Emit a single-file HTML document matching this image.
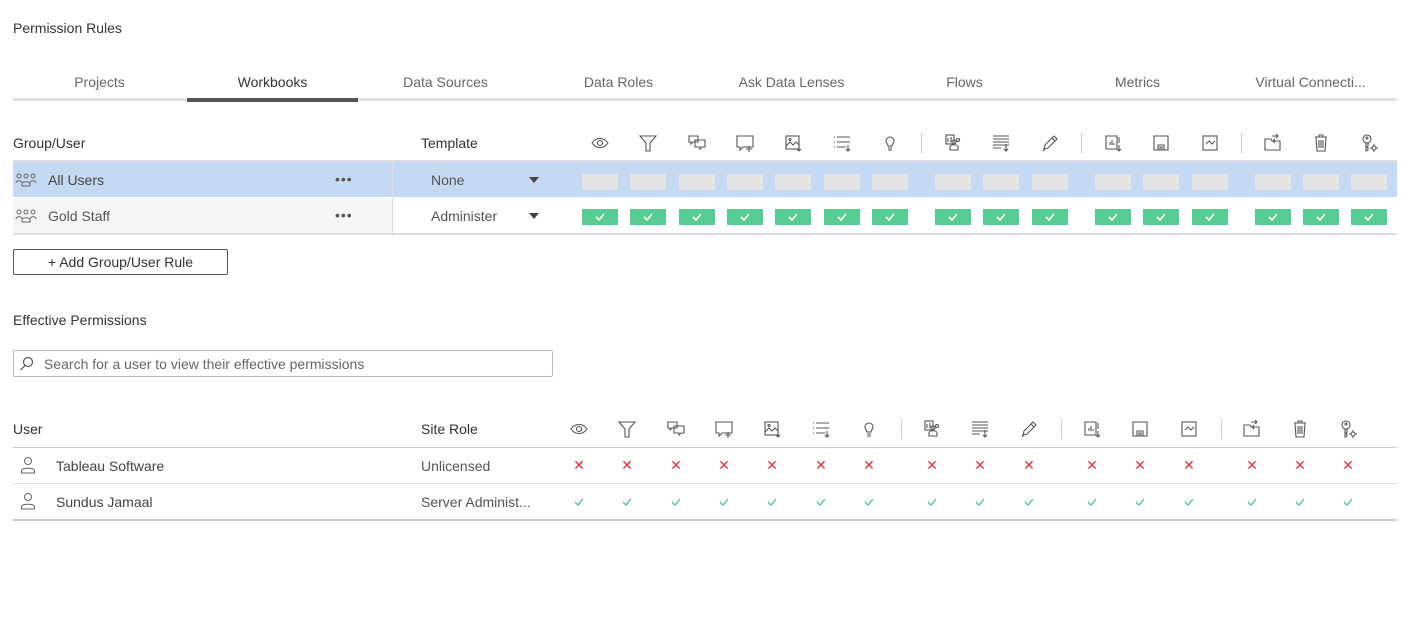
<!DOCTYPE html>
<html><head><meta charset="utf-8"><style>
*{box-sizing:border-box;margin:0;padding:0}
body{width:1409px;height:620px;background:#fff;font-family:"Liberation Sans",sans-serif;color:#333;position:relative;overflow:hidden;font-size:14px}
.a{position:absolute;white-space:nowrap}
.tab{position:absolute;top:74px;width:173px;text-align:center;color:#666;font-size:14px}
.box{position:absolute;width:36px;height:16px}
.g{background:#e4e4e4}
.ok{background:#59cc93}
.ic{position:absolute}
</style></head><body>
<div class="a" style="left:13px;top:20px;font-size:14px;color:#333">Permission Rules</div>
<div class="tab" style="left:13px">Projects</div>
<div class="tab" style="left:186px;color:#333">Workbooks</div>
<div class="tab" style="left:359px">Data Sources</div>
<div class="tab" style="left:532px">Data Roles</div>
<div class="tab" style="left:705px">Ask Data Lenses</div>
<div class="tab" style="left:878px">Flows</div>
<div class="tab" style="left:1051px">Metrics</div>
<div class="tab" style="left:1224px">Virtual Connecti...</div>
<div class="a" style="left:13px;top:98px;width:1384px;height:3px;background:#e2e2e2"></div>
<div class="a" style="left:187px;top:98px;width:171px;height:4px;background:#555"></div>

<div class="a" style="left:13px;top:135px">Group/User</div>
<div class="a" style="left:421px;top:135px">Template</div>
<div class="a" style="left:13px;top:160px;width:1384px;height:2px;background:#ddd"></div>
<div class="a" style="left:13px;top:162px;width:1384px;height:35px;background:#c5daf2"></div>
<div class="a" style="left:13px;top:198px;width:379px;height:35px;background:#f6f6f6"></div>
<div class="a" style="left:392px;top:162px;width:1px;height:71px;background:#ddd"></div>
<div class="a" style="left:13px;top:233px;width:1384px;height:2px;background:#ddd"></div>
<div class="a" style="left:48px;top:172px;color:#444">All Users</div>
<div class="a" style="left:48px;top:208px;color:#555">Gold Staff</div>
<div class="a" style="left:335px;top:171px;color:#555;font-size:14px;letter-spacing:1px">•••</div>
<div class="a" style="left:335px;top:207px;color:#555;font-size:14px;letter-spacing:1px">•••</div>
<div class="a" style="left:431px;top:172px;color:#555">None</div>
<div class="a" style="left:431px;top:208px;color:#555">Administer</div>
<div class="a" style="left:529px;top:177px;width:0;height:0;border-left:5px solid transparent;border-right:5px solid transparent;border-top:6px solid #444"></div>
<div class="a" style="left:529px;top:213px;width:0;height:0;border-left:5px solid transparent;border-right:5px solid transparent;border-top:6px solid #444"></div>
<svg class="ic" style="left:15px;top:172px" width="22" height="16" viewBox="0 0 22 16" fill="none" stroke="#666" stroke-width="1"><circle cx="4" cy="4" r="2"/><circle cx="11" cy="4" r="2"/><circle cx="18" cy="4" r="2"/><path d="M1 11c0-3 6-3 6 0M15 11c0-3 6-3 6 0M7 14v-2c0-3 8-3 8 0v2z"/></svg>
<svg class="ic" style="left:15px;top:208px" width="22" height="16" viewBox="0 0 22 16" fill="none" stroke="#666" stroke-width="1"><circle cx="4" cy="4" r="2"/><circle cx="11" cy="4" r="2"/><circle cx="18" cy="4" r="2"/><path d="M1 11c0-3 6-3 6 0M15 11c0-3 6-3 6 0M7 14v-2c0-3 8-3 8 0v2z"/></svg>

<div class="a" style="left:13px;top:249px;width:215px;height:26px;border:1px solid #555;border-radius:2px;text-align:center;line-height:24px;color:#333">+ Add Group/User Rule</div>

<div class="a" style="left:13px;top:312px">Effective Permissions</div>
<div class="a" style="left:13px;top:350px;width:540px;height:27px;border:1px solid #bbb;border-radius:2px"></div>
<svg class="ic" style="left:19px;top:356px" width="16" height="16" viewBox="0 0 16 16" fill="none" stroke="#555" stroke-width="1.2"><circle cx="9" cy="6" r="4.5"/><path d="M6 9.5L1.5 14"/></svg>
<div class="a" style="left:44px;top:356px;color:#666">Search for a user to view their effective permissions</div>

<div class="a" style="left:13px;top:421px">User</div>
<div class="a" style="left:421px;top:421px">Site Role</div>
<div class="a" style="left:13px;top:447px;width:1384px;height:1px;background:#ccc"></div>
<div class="a" style="left:13px;top:483px;width:1384px;height:1px;background:#e4e4e4"></div>
<div class="a" style="left:13px;top:519px;width:1384px;height:2px;background:#ccc"></div>
<svg class="ic" style="left:20px;top:456px" width="16" height="18" viewBox="0 0 16 18" fill="none" stroke="#666" stroke-width="1"><circle cx="8" cy="5" r="3.5"/><path d="M1.5 17v-2.5c0-3 13-3 13 0V17z"/></svg>
<svg class="ic" style="left:20px;top:492px" width="16" height="18" viewBox="0 0 16 18" fill="none" stroke="#666" stroke-width="1"><circle cx="8" cy="5" r="3.5"/><path d="M1.5 17v-2.5c0-3 13-3 13 0V17z"/></svg>
<div class="a" style="left:56px;top:458px;color:#444">Tableau Software</div>
<div class="a" style="left:56px;top:494px;color:#444">Sundus Jamaal</div>
<div class="a" style="left:421px;top:458px;color:#555">Unlicensed</div>
<div class="a" style="left:421px;top:494px;color:#555">Server Administ...</div>

<div id="c"></div>
<script>
var icons=[
'<path d="M2 10c4-6 12-6 16 0c-4 6-12 6-16 0z"/><circle cx="10" cy="10" r="2.5"/>',
'<path d="M2 3h16l-6 7v8h-4v-8z"/>',
'<path d="M2 3h9v6H6l-2 2V9H2zM8 7h10v7h-3l-2 2v-2H8z"/>',
'<path d="M2 3h16v11H8l-3 3v-3H2zM14 13v6M11 16h6"/>',
'<rect x="3" y="3" width="13" height="13"/><path d="M3 13l4-4 3 3 3-3 3 3M16 13v5M14 16l2 2 2-2"/><circle cx="7" cy="6.5" r="1"/>',
'<path d="M2 4h1M5 4h13M2 9h1M5 9h13M2 14h1M5 14h9M16 12v6M14 16l2 2 2-2"/>',
'<path d="M6 8a4 4 0 1 1 8 0c0 2-2 3-2 5H8c0-2-2-3-2-5zM8 15h4M8 17h4"/>',
'<rect x="3" y="2" width="8" height="9"/><circle cx="11" cy="9" r="2"/><circle cx="15" cy="7" r="1.5"/><path d="M7 17v-3c0-3 8-3 8 0v3zM5 5v4M8 4v5"/>',
'<path d="M2 3h16M2 6h16M2 9h16M2 12h16M2 15h8M15 11v7M13 16l2 2 2-2"/>',
'<path d="M4 16l1-4 9-9 3 3-9 9zM12 5l3 3M3 18l2-2"/>',
'<path d="M3 3h11v13H3zM7 12V9M9 12V7M11 12v-2M16 4v6M16 12v6M14 16l2 2 2-2"/>',
'<path d="M3 3h14v14H3zM7 17v-5h6v5M9 14h2v3H9z"/>',
'<rect x="3" y="3" width="14" height="14"/><path d="M6 11l3-3 3 3 3-3"/>',
'<path d="M2 6h6l1 2h8v9H2zM9 3h6M13 1l2 2-2 2M12 6l-2 2 2 2M17 8v4"/>',
'<path d="M4 4h12M8 4V2h4v2M5 4l1 14h8l1-14M8 7v8M10 7v8M12 7v8"/>',
'<circle cx="8" cy="6" r="4"/><circle cx="8" cy="5" r="1"/><path d="M7 10v8l2-1v-2l-1-1 1-1v-3"/><circle cx="15" cy="15" r="2"/><path d="M15 11v2M15 17v2M11 15h2M17 15h2"/>'
];
var cols=[600,648,697,745,793,842,890,953,1001,1050,1113,1161,1210,1273,1321,1369];
var h='';
function svg(x,y,i){return '<svg class="ic" style="left:'+(x-11)+'px;top:'+y+'px" width="22" height="22" viewBox="-1 -1 22 22" fill="none" stroke="#555" stroke-width="1.1">'+icons[i]+'</svg>';}
cols.forEach(function(c,i){
 h+=svg(c,132,i);
 h+='<div class="box g" style="left:'+(c-18)+'px;top:174px"></div>';
 h+='<div class="box ok" style="left:'+(c-18)+'px;top:209px"><svg width="36" height="16" viewBox="0 0 36 16"><path d="M14 8l3 3 5-6" fill="none" stroke="#fff" stroke-width="1.6"/></svg></div>';
 var b=c-21;
 h+=svg(b,418,i);
 h+='<div class="a" style="left:'+(b-6)+'px;top:457px;color:#e0343a;font-size:14px;width:12px;text-align:center">✕</div>';
 h+='<svg class="ic" style="left:'+(b-6)+'px;top:496px" width="12" height="12" viewBox="0 0 12 12"><path d="M2 6l3 3 5-6" fill="none" stroke="#3cbf7e" stroke-width="1.2"/></svg>';
});
[921,1081,1241].forEach(function(x){h+='<div class="a" style="left:'+x+'px;top:133px;width:1px;height:20px;background:#ccc"></div><div class="a" style="left:'+(x-20)+'px;top:419px;width:1px;height:20px;background:#ccc"></div>';});
document.getElementById('c').innerHTML=h;
</script>
</body></html>
